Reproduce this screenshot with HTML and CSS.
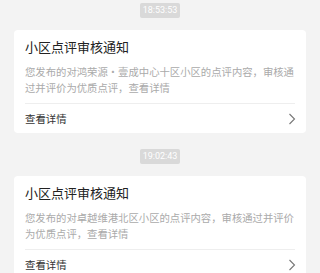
FILE: index.html
```html
<!DOCTYPE html>
<html lang="zh-CN">
<head>
<meta charset="utf-8">
<link rel="stylesheet" href="styles.css">
</head>
<body>
<div class="list">
  <div class="msg">
    <div class="time">18:53:53</div>
    <div class="card">
      <div class="title">小区点评审核通知</div>
      <div class="desc">您发布的对鸿荣源·壹成中心十区小区的点评内容，审核通过并评价为优质点评，查看详情</div>
      <div class="link">
        <span>查看详情</span>
        <svg class="chev" width="8" height="12" viewBox="0 0 8 12"><polyline points="1.5,1 6.5,6 1.5,11" fill="none" stroke="#777" stroke-width="1.1"/></svg>
      </div>
    </div>
  </div>
  <div class="msg">
    <div class="time">19:02:43</div>
    <div class="card">
      <div class="title">小区点评审核通知</div>
      <div class="desc">您发布的对卓越维港北区小区的点评内容，审核通过并评价为优质点评，查看详情</div>
      <div class="link">
        <span>查看详情</span>
        <svg class="chev" width="8" height="12" viewBox="0 0 8 12"><polyline points="1.5,1 6.5,6 1.5,11" fill="none" stroke="#777" stroke-width="1.1"/></svg>
      </div>
    </div>
  </div>
</div>
</body>
</html>
```

FILE: styles.css
```css
html, body {
  margin: 0;
  background: #f3f3f3;
  font-family: "Noto Sans CJK SC", "Noto Sans", sans-serif;
}
.list {
  display: flex;
  flex-direction: column;
  gap: 16px;
  padding: 3px 14px 0;
}
.msg {
  display: flex;
  flex-direction: column;
  align-items: center;
  gap: 12px;
}
.time {
  background: #d9d9d9;
  color: #fff;
  font-family: Roboto, "Noto Sans", sans-serif;
  font-size: 9px;
  line-height: 15px;
  height: 15px;
  padding: 0 3px;
  border-radius: 2px;
}
.card {
  align-self: stretch;
  background: #fff;
  border-radius: 4px;
  padding: 8px 11px 0;
}
.title {
  font-size: 13px;
  line-height: 18px;
  color: #222;
}
.desc {
  margin-top: 8px;
  font-size: 10.35px;
  line-height: 16px;
  color: #aaa;
  padding-bottom: 7px;
  border-bottom: 1px solid #eeeeee;
}
.link {
  display: flex;
  justify-content: space-between;
  align-items: center;
  height: 29px;
  font-size: 10.4px;
  color: #333;
}
.chev {
  margin-right: -1px;
}
```
